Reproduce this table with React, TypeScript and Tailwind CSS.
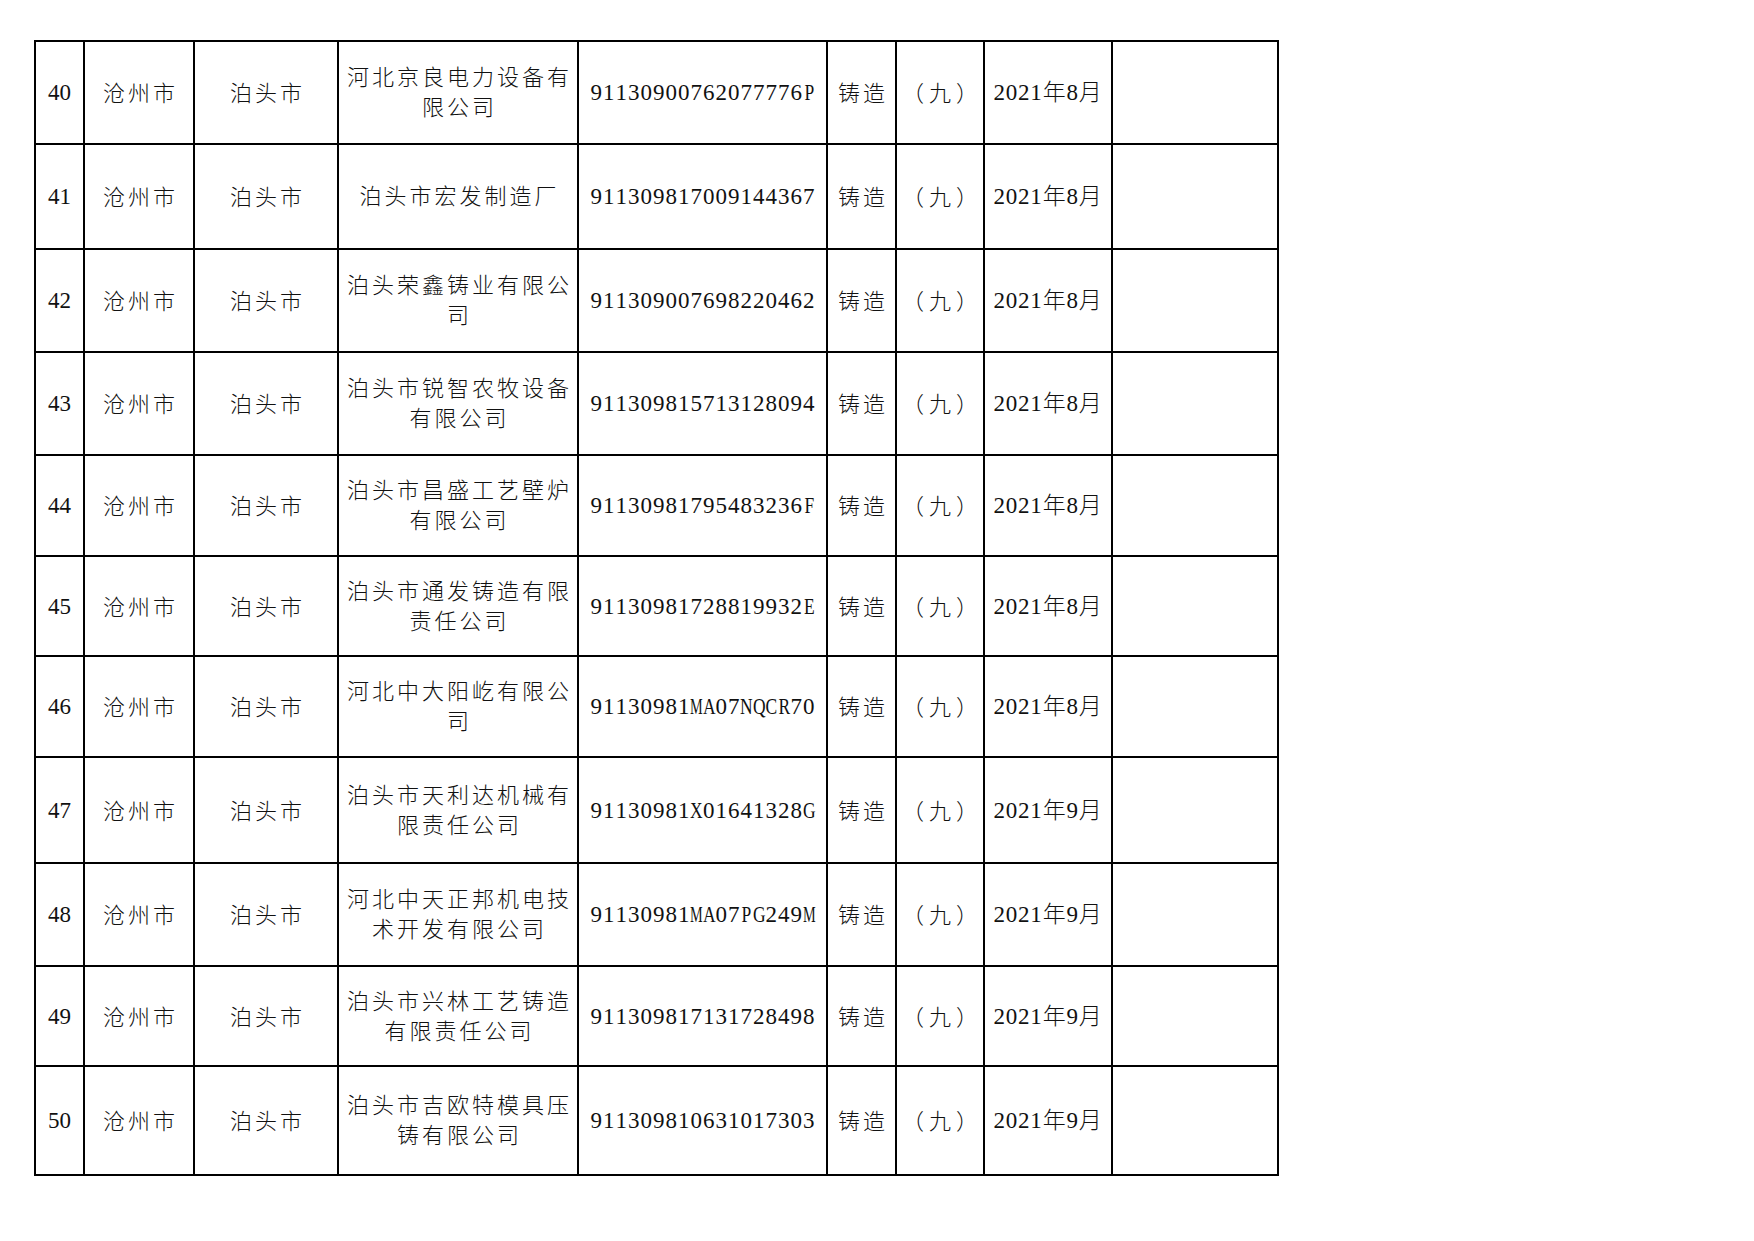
import React from "react";

type Row = {
  no: string;
  name: string;
  code: string;
  date: string;
};

const rows: Row[] = [
  { no: "40", name: "河北京良电力设备有限公司", code: "91130900762077776P", date: "2021年8月" },
  { no: "41", name: "泊头市宏发制造厂", code: "911309817009144367", date: "2021年8月" },
  { no: "42", name: "泊头荣鑫铸业有限公司", code: "911309007698220462", date: "2021年8月" },
  { no: "43", name: "泊头市锐智农牧设备有限公司", code: "911309815713128094", date: "2021年8月" },
  { no: "44", name: "泊头市昌盛工艺壁炉有限公司", code: "91130981795483236F", date: "2021年8月" },
  { no: "45", name: "泊头市通发铸造有限责任公司", code: "91130981728819932E", date: "2021年8月" },
  { no: "46", name: "河北中大阳屹有限公司", code: "91130981MA07NQCR70", date: "2021年8月" },
  { no: "47", name: "泊头市天利达机械有限责任公司", code: "91130981X01641328G", date: "2021年9月" },
  { no: "48", name: "河北中天正邦机电技术开发有限公司", code: "91130981MA07PG249M", date: "2021年9月" },
  { no: "49", name: "泊头市兴林工艺铸造有限责任公司", code: "911309817131728498", date: "2021年9月" },
  { no: "50", name: "泊头市吉欧特模具压铸有限公司", code: "911309810631017303", date: "2021年9月" },
];

const cell = "bg-white flex items-center justify-center text-center";
const cjk = "text-[22px] tracking-[3px] font-light";

function charClass(ch: string): string {
  if (ch === "M") return "inline-flex w-[12.5px] justify-center scale-x-[0.62]";
  if (/[A-Z]/.test(ch)) return "inline-flex w-[12.5px] justify-center scale-x-[0.76]";
  return "inline-flex w-[12.5px] justify-center";
}

function Code({ value }: { value: string }) {
  return (
    <span className="inline-flex">
      {value.split("").map((ch, i) => (
        <span key={i} className={charClass(ch)}>
          {ch}
        </span>
      ))}
    </span>
  );
}

export default function App() {
  return (
    <div className="w-[1754px] h-[1241px] bg-white text-[#111] [font-family:'Liberation_Serif','Noto_Sans_CJK_SC',serif] overflow-hidden">
      <div className="pt-[40px] pl-[34px]">
        <div className="grid w-fit grid-cols-[47px_108px_142px_238px_247px_67px_86px_126px_164px] grid-rows-[101px_103px_101px_101px_99px_98px_99px_104px_101px_98px_107px] gap-[2px] bg-black p-[2px]">
          {rows.map((r) => (
            <React.Fragment key={r.no}>
              <div className={`${cell} text-[23px] pt-[2px]`}>{r.no}</div>
              <div className={`${cell} ${cjk} pt-[2px]`}>
                <span className="pl-[3px]">沧州市</span>
              </div>
              <div className={`${cell} ${cjk} pt-[2px]`}>
                <span className="pl-[3px]">泊头市</span>
              </div>
              <div className={`${cell} ${cjk} leading-[30px] px-[4px] pt-[1px]`}>
                <span className="pl-[3px]">{r.name}</span>
              </div>
              <div className={`${cell} text-[23px] pt-[2px]`}>
                <Code value={r.code} />
              </div>
              <div className={`${cell} ${cjk} pt-[2px]`}>
                <span className="pl-[3px]">铸造</span>
              </div>
              <div className={`${cell} text-[22px] font-light tracking-[5px] pt-[2px]`}>
                <span className="pl-[5px]">（九）</span>
              </div>
              <div className={`${cell} text-[23px] tracking-[0.8px] pt-[2px]`}>
                <span className="[&>span]:font-light">
                  2021<span>年</span>
                  {r.date.slice(5, 6)}
                  <span>月</span>
                </span>
              </div>
              <div className={cell}></div>
            </React.Fragment>
          ))}
        </div>
      </div>
    </div>
  );
}
